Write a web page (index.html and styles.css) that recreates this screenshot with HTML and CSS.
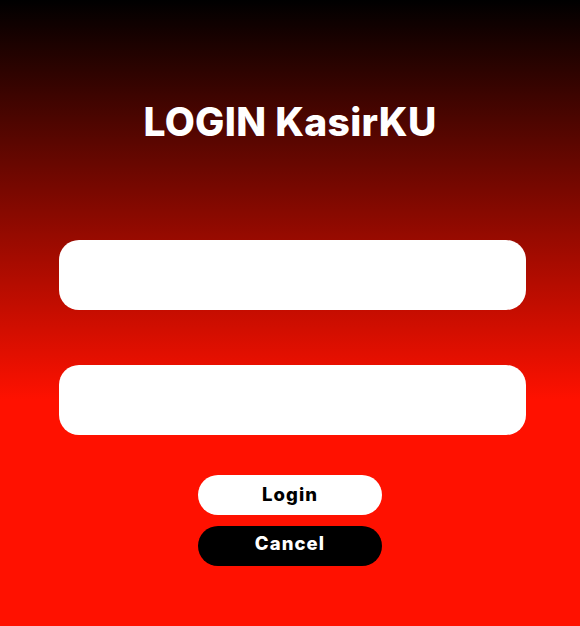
FILE: index.html
```html
<!DOCTYPE html>
<html>
<head>
<meta charset="utf-8">
<link rel="stylesheet" href="styles.css">
</head>
<body>
<main class="page">
  <h1 class="title">LOGIN KasirKU</h1>
  <form class="form">
    <input class="field" type="text">
    <input class="field" type="password">
    <div class="actions">
      <button type="button" class="btn btn-login">Login</button>
      <button type="button" class="btn btn-cancel">Cancel</button>
    </div>
  </form>
</main>
</body>
</html>
```
FILE: styles.css
```css
* { box-sizing: border-box; }
html, body { margin: 0; padding: 0; }
body {
  width: 580px;
  height: 626px;
  overflow: hidden;
  background: linear-gradient(to bottom, #000000 0%, #ff1100 64%, #ff1100 100%);
  font-family: Inter, "Noto Sans", sans-serif;
}
.page {
  display: flex;
  flex-direction: column;
  align-items: center;
  padding-top: 98px;
}
.title {
  margin: 0;
  color: #fff;
  font-size: 39px;
  font-weight: 800;
  line-height: 48px;
  letter-spacing: 0.3px;
}
.form {
  display: flex;
  flex-direction: column;
  align-items: center;
  margin-top: 94px;
  gap: 55px;
}
.field {
  width: 467px;
  height: 70px;
  margin-left: 5px;
  border: none;
  border-radius: 20px;
  background: #fff;
  outline: none;
}
.actions {
  display: flex;
  flex-direction: column;
  gap: 11px;
  margin-top: -15px;
}
.btn {
  width: 184px;
  height: 40px;
  border: none;
  border-radius: 20px;
  font-family: Inter, "Noto Sans", sans-serif;
  font-weight: 800;
  font-size: 18.5px;
  letter-spacing: 1.1px;
  padding: 0;
}
.btn-login { background: #fff; color: #000; padding-bottom: 2px; }
.btn-cancel { background: #000; color: #fff; padding-bottom: 6px; }
```
